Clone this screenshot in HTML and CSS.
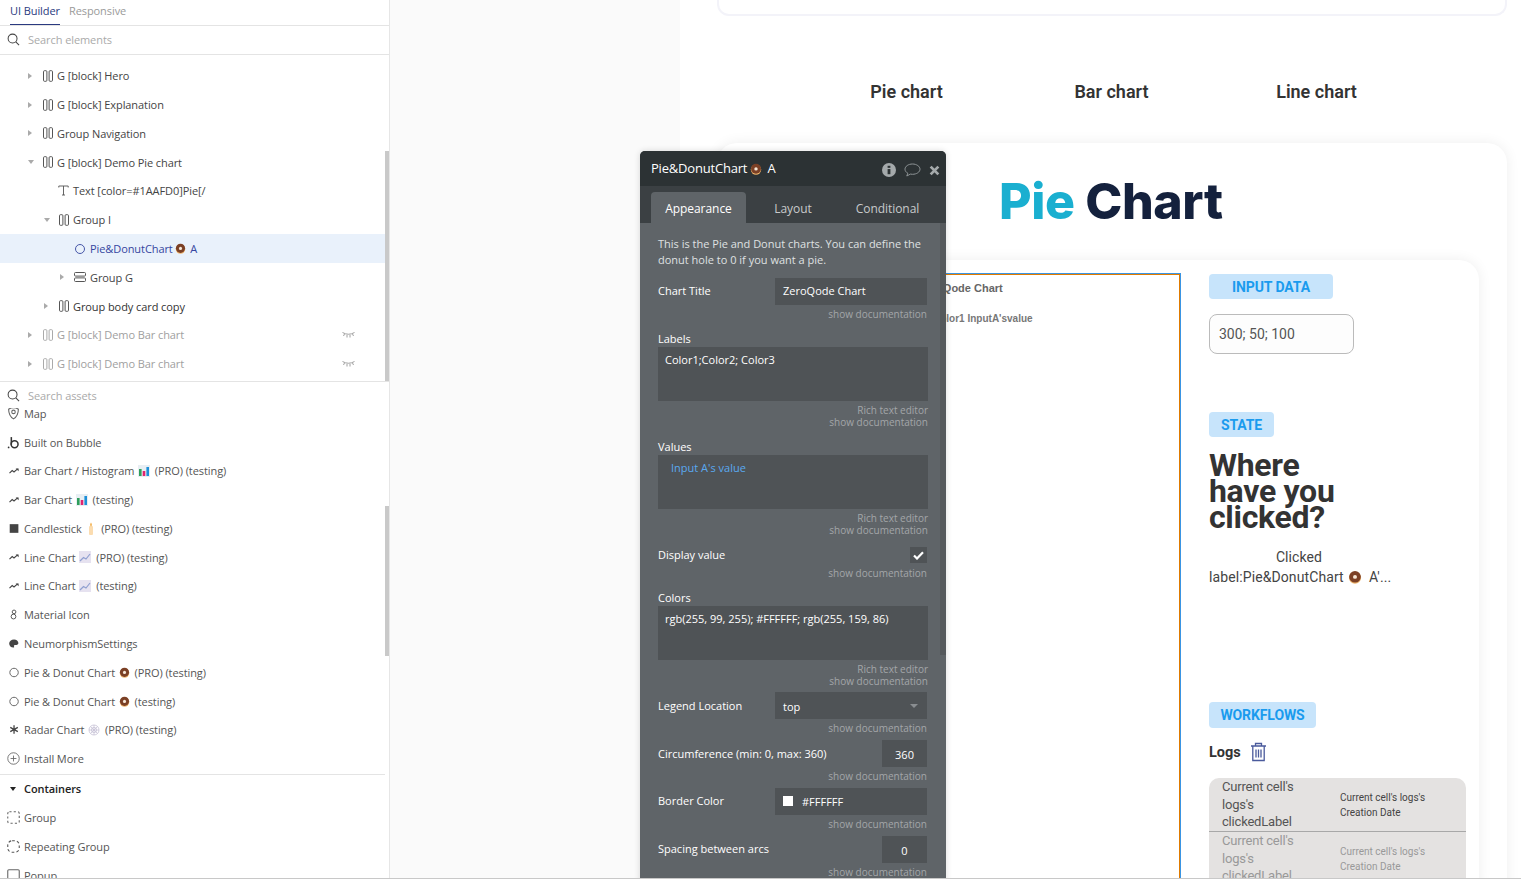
FILE: index.html
```html
<!DOCTYPE html>
<html lang="en">
<head>
    <meta charset="UTF-8">
    <title>UI Builder</title>
    <link rel="stylesheet" href="styles.css">
</head>
<body>

<svg class="icon-defs" width="0" height="0">
    <symbol id="i-cols" viewBox="0 0 10 12"><rect x="0.5" y="0.7" width="3.4" height="10.6" rx="1" fill="none" stroke="currentColor"/><rect x="6.1" y="0.7" width="3.4" height="10.6" rx="1" fill="none" stroke="currentColor"/></symbol>
    <symbol id="i-rows" viewBox="0 0 12 10"><rect x="0.5" y="0.5" width="11" height="3.6" rx="1" fill="none" stroke="currentColor"/><rect x="0.5" y="5.9" width="11" height="3.6" rx="1" fill="none" stroke="currentColor"/></symbol>
    <symbol id="i-search" viewBox="0 0 14 14"><circle cx="6" cy="6" r="4.8" fill="none" stroke="currentColor" stroke-width="1.1"/><path d="M9.5 9.5L13 13" stroke="currentColor" stroke-width="1.1"/></symbol>
    <symbol id="i-trend" viewBox="0 0 10 6"><path d="M0.5 5.2L3.2 2.6L5 4L8.6 0.8" fill="none" stroke="currentColor" stroke-width="1.1"/><path d="M6.6 0.4H9.6V3.2z" fill="currentColor"/></symbol>
    <symbol id="i-closed-eye" viewBox="0 0 13 7"><path d="M0.5 1.5Q6.5 5 12.5 1.5M2.5 3L1.5 5M5 4V6.5M8 4V6.5M10.5 3L11.5 5" fill="none" stroke="currentColor" stroke-width="0.8"/></symbol>
    <symbol id="i-donut" viewBox="0 0 12 12"><circle cx="6" cy="6.6" r="5.2" fill="#f0b46a"/><circle cx="6" cy="5.8" r="5" fill="#7b4026"/><circle cx="6" cy="5.9" r="1.7" fill="#f6e8d8"/></symbol>
    <symbol id="i-bars" viewBox="0 0 12 12"><rect width="12" height="12" fill="#e8eef3"/><rect x="1" y="4" width="2.6" height="7" fill="#2e9e5b"/><rect x="4.7" y="6" width="2.6" height="5" fill="#e0246f"/><rect x="8.4" y="2" width="2.6" height="9" fill="#1d8fd8"/></symbol>
    <symbol id="i-lines" viewBox="0 0 12 12"><rect width="12" height="12" fill="#e6e2f0"/><path d="M1 10L4.5 6.5L7 8L11 3" fill="none" stroke="#8f9fd0" stroke-width="1.2"/></symbol>
    <symbol id="i-candle" viewBox="0 0 8 13"><rect x="2" y="4" width="4" height="9" rx="1" fill="#fbdcb0"/><path d="M4 0.5Q6 3 4 4.6Q2 3 4 0.5" fill="#f4b860"/></symbol>
    <symbol id="i-web" viewBox="0 0 12 12"><g fill="none" stroke="#c6c2d6" stroke-width="0.8"><circle cx="6" cy="6" r="5"/><circle cx="6" cy="6" r="2.6"/><path d="M1 6H11M6 1V11M2.500 2.500L9.500 9.500M9.500 2.500L2.500 9.500"/></g></symbol>
</svg>

<div class="screen">
    <aside class="sidebar">
        <div class="tabs">
            <span class="tab tab-active">UI Builder</span>
            <span class="tab">Responsive</span>
        </div>
        <div class="search-row search-elements">
            <svg class="search-icon"><use href="#i-search"/></svg>
            <span>Search elements</span>
        </div>

        <div class="tree">
            <div class="row lvl-1"><i class="caret"></i><svg class="ico-cols"><use href="#i-cols"/></svg>G [block] Hero</div>
            <div class="row lvl-1"><i class="caret"></i><svg class="ico-cols"><use href="#i-cols"/></svg>G [block] Explanation</div>
            <div class="row lvl-1"><i class="caret"></i><svg class="ico-cols"><use href="#i-cols"/></svg>Group Navigation</div>
            <div class="row lvl-1"><i class="caret caret-open"></i><svg class="ico-cols"><use href="#i-cols"/></svg>G [block] Demo Pie chart</div>
            <div class="row lvl-2"><i class="caret caret-none"></i><svg class="ico-t" viewBox="0 0 11 11"><path d="M0.800 2.500V1H10.200V2.500M5.500 1V10M4 10H7" fill="none" stroke="#555" stroke-width="0.900"/></svg>Text [color=#1AAFD0]Pie[/</div>
            <div class="row lvl-2"><i class="caret caret-open"></i><svg class="ico-cols"><use href="#i-cols"/></svg>Group I</div>
            <div class="row lvl-3 row-selected"><i class="caret caret-none"></i><i class="ico-ring"></i>Pie&amp;DonutChart <svg class="emoji emoji-tree"><use href="#i-donut"/></svg> A</div>
            <div class="row lvl-3"><i class="caret"></i><svg class="ico-rows"><use href="#i-rows"/></svg>Group G</div>
            <div class="row lvl-2 row-dark"><i class="caret"></i><svg class="ico-cols"><use href="#i-cols"/></svg>Group body card copy</div>
            <div class="row lvl-1 row-hidden"><i class="caret"></i><svg class="ico-cols"><use href="#i-cols"/></svg>G [block] Demo Bar chart<svg class="eye"><use href="#i-closed-eye"/></svg></div>
            <div class="row lvl-1 row-hidden"><i class="caret"></i><svg class="ico-cols"><use href="#i-cols"/></svg>G [block] Demo Bar chart<svg class="eye"><use href="#i-closed-eye"/></svg></div>
            <div class="scroll-thumb thumb-tree"></div>
        </div>

        <div class="search-row search-assets">
            <svg class="search-icon"><use href="#i-search"/></svg>
            <span>Search assets</span>
        </div>

        <div class="assets">
            <div class="asset asset-first"><svg class="asset-ico" viewBox="0 0 12 12"><path d="M1.500 2Q6 -0.500 10.500 2Q10.500 8 6 11Q1.500 8 1.500 2z" fill="none" stroke="#666"/><circle cx="6" cy="4.500" r="1.600" fill="none" stroke="#666"/></svg>Map</div>
            <div class="asset"><svg class="asset-ico" viewBox="0 0 12 12"><path d="M4 1V8" stroke="#333" stroke-width="1.400"/><circle cx="7" cy="7.600" r="3.200" fill="none" stroke="#333" stroke-width="1.400"/><circle cx="1.500" cy="10.500" r="0.800" fill="#333"/></svg>Built on Bubble</div>
            <div class="asset"><svg class="asset-ico ico-trend"><use href="#i-trend"/></svg>Bar Chart / Histogram <svg class="emoji"><use href="#i-bars"/></svg> (PRO) (testing)</div>
            <div class="asset"><svg class="asset-ico ico-trend"><use href="#i-trend"/></svg>Bar Chart <svg class="emoji"><use href="#i-bars"/></svg> (testing)</div>
            <div class="asset"><svg class="asset-ico" viewBox="0 0 12 12"><rect x="2.500" y="2" width="8" height="8" fill="#444"/></svg>Candlestick <svg class="emoji emoji-candle"><use href="#i-candle"/></svg> (PRO) (testing)</div>
            <div class="asset"><svg class="asset-ico ico-trend"><use href="#i-trend"/></svg>Line Chart <svg class="emoji"><use href="#i-lines"/></svg> (PRO) (testing)</div>
            <div class="asset"><svg class="asset-ico ico-trend"><use href="#i-trend"/></svg>Line Chart <svg class="emoji"><use href="#i-lines"/></svg> (testing)</div>
            <div class="asset"><svg class="asset-ico" viewBox="0 0 12 12"><circle cx="6.500" cy="3.600" r="1.700" fill="none" stroke="#555" stroke-width="0.900"/><circle cx="6" cy="7.900" r="2.200" fill="none" stroke="#555" stroke-width="0.900"/></svg>Material Icon</div>
            <div class="asset"><svg class="asset-ico" viewBox="0 0 12 12"><path d="M6.500 2.200C3.900 2.200 2 3.900 2 6s1.700 3.800 3.800 3.800c.8 0 1-.6.700-1.100-.4-.7 0-1.400.8-1.400h1.400c1.100 0 1.800-.7 1.800-1.700 0-1.900-1.800-3.400-4-3.400z" fill="#444"/></svg>NeumorphismSettings</div>
            <div class="asset"><svg class="asset-ico" viewBox="0 0 12 12"><circle cx="6.500" cy="6" r="3.900" fill="none" stroke="#666" stroke-width="0.900"/></svg>Pie &amp; Donut Chart <svg class="emoji emoji-donut"><use href="#i-donut"/></svg> (PRO) (testing)</div>
            <div class="asset"><svg class="asset-ico" viewBox="0 0 12 12"><circle cx="6.500" cy="6" r="3.900" fill="none" stroke="#666" stroke-width="0.900"/></svg>Pie &amp; Donut Chart <svg class="emoji emoji-donut"><use href="#i-donut"/></svg> (testing)</div>
            <div class="asset"><svg class="asset-ico" viewBox="0 0 12 12"><path d="M6.500 2V10M3 4L10 8M10 4L3 8" stroke="#444" stroke-width="1.200"/></svg>Radar Chart <svg class="emoji"><use href="#i-web"/></svg> (PRO) (testing)</div>
            <div class="asset"><svg class="asset-ico" viewBox="0 0 12 12"><circle cx="6" cy="6" r="5.300" fill="none" stroke="#666" stroke-width="0.800"/><path d="M6 3.300V8.700M3.300 6H8.700" stroke="#666" stroke-width="0.800"/></svg>Install More</div>
            <div class="assets-head"><i class="caret-dark"></i>Containers</div>
            <div class="asset"><svg class="asset-ico" viewBox="0 0 12 12"><rect x="0.700" y="0.700" width="10.600" height="10.600" rx="1.500" fill="none" stroke="#666" stroke-dasharray="2 2"/></svg>Group</div>
            <div class="asset"><svg class="asset-ico" viewBox="0 0 12 12"><rect x="0.700" y="0.700" width="10.600" height="10.600" rx="4" fill="none" stroke="#555" stroke-dasharray="2.500 2"/></svg>Repeating Group</div>
            <div class="asset"><svg class="asset-ico" viewBox="0 0 12 12"><rect x="0.700" y="0.700" width="10.600" height="10.600" rx="1" fill="none" stroke="#666"/></svg>Popup</div>
            <div class="scroll-thumb thumb-assets"></div>
        </div>
    </aside>

    <main class="canvas">
        <div class="page">
            <div class="top-card"></div>

            <nav class="chart-nav">
                <span>Pie chart</span>
                <span>Bar chart</span>
                <span>Line chart</span>
            </nav>

            <section class="demo">
                <h1 class="demo-title"><span class="accent">Pie</span> Chart</h1>

                <div class="demo-card">
                    <div class="chart-box">
                        <div class="chart-title">ZeroQode Chart</div>
                        <div class="chart-legend">Color1 InputA'svalue</div>
                    </div>

                    <div class="demo-side">
                        <div class="pill pill-input">INPUT DATA</div>
                        <div class="value-input">300; 50; 100</div>

                        <div class="pill pill-state">STATE</div>
                        <h2 class="where">Where<br>have you<br>clicked?</h2>
                        <p class="clicked">
                            <span class="clicked-top">Clicked</span>
                            label:Pie&amp;DonutChart <svg class="emoji emoji-large"><use href="#i-donut"/></svg> A'...
                        </p>

                        <div class="pill pill-flows">WORKFLOWS</div>
                        <div class="logs-head">
                            Logs
                            <svg class="trash" viewBox="0 0 17 20"><path d="M1 4H16M5.500 4V1.500H11.500V4M2.800 4V18.500H14.200V4M6 7.500V15.500M8.500 7.500V15.500M11 7.500V15.500" fill="none" stroke="#4a5a9c" stroke-width="1.300"/></svg>
                        </div>
                        <div class="logs">
                            <div class="log-row">
                                <div class="log-label">Current cell's logs's clickedLabel</div>
                                <div class="log-date">Current cell's logs's Creation Date</div>
                            </div>
                            <div class="log-row log-faded">
                                <div class="log-label">Current cell's logs's clickedLabel</div>
                                <div class="log-date">Current cell's logs's Creation Date</div>
                            </div>
                        </div>
                    </div>
                </div>
            </section>
        </div>

        <div class="editor">
            <div class="editor-head">
                <span class="editor-name">Pie&amp;DonutChart <svg class="emoji emoji-head"><use href="#i-donut"/></svg> A</span>
                <span class="editor-actions">
                    <svg width="14" height="14" viewBox="0 0 15 15"><circle cx="7.500" cy="7.500" r="7.500" fill="#a4a9ab"/><rect x="6" y="6.500" width="3" height="5.500" fill="#2c3234"/><rect x="6" y="3" width="3" height="2.200" fill="#2c3234"/></svg>
                    <svg width="17" height="14" viewBox="0 0 17 14"><path d="M8.500 1C4.400 1 1 3.300 1 6.200c0 1.700 1.100 3.100 2.800 4L2.800 13l3.600-1.900c.7.100 1.400.2 2.100.2 4.100 0 7.500-2.300 7.500-5.100S12.600 1 8.500 1z" fill="none" stroke="#8e9496"/></svg>
                    <svg width="11" height="11" viewBox="0 0 12 12"><path d="M1.800 1.800L10.200 10.200M10.200 1.800L1.800 10.200" stroke="#a4a9ab" stroke-width="3"/></svg>
                </span>
            </div>
            <div class="editor-tabs">
                <span class="editor-tab editor-tab-active">Appearance</span>
                <span class="editor-tab">Layout</span>
                <span class="editor-tab">Conditional</span>
            </div>
            <div class="editor-body">
                <p class="editor-intro">This is the Pie and Donut charts. You can define the donut hole to 0 if you want a pie.</p>

                <div class="field field-first">
                    <div class="field-row"><label>Chart Title</label><div class="input input-wide input-title">ZeroQode Chart</div></div>
                    <div class="doc">show documentation</div>
                </div>

                <div class="field">
                    <label class="block-label">Labels</label>
                    <div class="textarea">Color1;Color2; Color3</div>
                    <div class="doc-rich">Rich text editor</div>
                    <div class="doc doc-tight">show documentation</div>
                </div>

                <div class="field">
                    <label class="block-label">Values</label>
                    <div class="textarea textarea-dynamic">Input A's value</div>
                    <div class="doc-rich">Rich text editor</div>
                    <div class="doc doc-tight">show documentation</div>
                </div>

                <div class="field field-check">
                    <div class="field-row field-row-small">
                        <label>Display value</label>
                        <div class="checkbox"><svg width="11" height="9" viewBox="0 0 11 9"><path d="M1 4.500L4 7.500L10 1.200" fill="none" stroke="#fff" stroke-width="2.200"/></svg></div>
                    </div>
                    <div class="doc doc-check">show documentation</div>
                </div>

                <div class="field">
                    <label class="block-label">Colors</label>
                    <div class="textarea">rgb(255, 99, 255); #FFFFFF; rgb(255, 159, 86)</div>
                    <div class="doc-rich">Rich text editor</div>
                    <div class="doc doc-tight">show documentation</div>
                </div>

                <div class="field field-legend">
                    <div class="field-row"><label class="label-low">Legend Location</label><div class="input input-wide input-select">top<i class="select-caret"></i></div></div>
                    <div class="doc">show documentation</div>
                </div>

                <div class="field field-compact">
                    <div class="field-row"><label class="label-low">Circumference (min: 0, max: 360)</label><div class="input input-num">360</div></div>
                    <div class="doc">show documentation</div>
                </div>

                <div class="field field-compact">
                    <div class="field-row"><label>Border Color</label><div class="input input-wide input-color"><i class="swatch"></i>#FFFFFF</div></div>
                    <div class="doc">show documentation</div>
                </div>

                <div class="field field-compact">
                    <div class="field-row"><label>Spacing between arcs</label><div class="input input-num">0</div></div>
                    <div class="doc">show documentation</div>
                </div>

                <div class="editor-thumb"></div>
            </div>
        </div>
    </main>
</div>

</body>
</html>
```
FILE: styles.css
```css
* {
    margin: 0;
    padding: 0;
    box-sizing: border-box;
}

html, body {
    height: 100%;
    overflow: hidden;
}

body {
    font-family: 'Open Sans', sans-serif;
    font-size: 11px;
    color: #444;
    background-color: #fff;
}

.icon-defs {
    position: absolute;
}

.screen {
    display: flex;
    height: 879px;
    border-bottom: 1px solid #c8c8c8;
    overflow: hidden;
}

/* left panel */
.sidebar {
    width: 390px;
    flex-shrink: 0;
    border-right: 1px solid #e6e6e6;
    display: flex;
    flex-direction: column;
    background-color: #fff;
    letter-spacing: -0.08px;
}

.tabs {
    height: 26px;
    padding-left: 10px;
    display: flex;
    gap: 9px;
    border-bottom: 1px solid #e4e4e4;
    flex-shrink: 0;
}

.tab {
    height: 25px;
    line-height: 22px;
    color: #9a9a9a;
    font-size: 11px;
}

.tab-active {
    color: #2a3a80;
    border-bottom: 1px solid #2a3a80;
}

.search-row {
    height: 29px;
    padding-left: 7px;
    display: flex;
    align-items: center;
    gap: 8px;
    color: #aaa;
    border-bottom: 1px solid #e4e4e4;
    flex-shrink: 0;
}

.search-elements {
    padding-bottom: 1px;
}

.search-icon {
    width: 13px;
    height: 13px;
    color: #444;
}

.tree {
    height: 327px;
    padding-top: 6.4px;
    position: relative;
    flex-shrink: 0;
    border-bottom: 1px solid #e4e4e4;
}

.row {
    height: 28.8px;
    display: flex;
    align-items: center;
    white-space: pre;
    margin-right: 4px;
}

.lvl-1 { padding-left: 28px; }
.lvl-2 { padding-left: 44px; }
.lvl-3 { padding-left: 60px; }

.row-selected {
    background-color: #e9f1fb;
    color: #3646a0;
}

.row-dark {
    color: #333;
}

.row-hidden {
    color: #a0a0a0;
}

.caret {
    width: 0;
    height: 0;
    margin-right: 11px;
    border-left: 4px solid #aaa;
    border-top: 3px solid transparent;
    border-bottom: 3px solid transparent;
}

.caret-open {
    margin-right: 9px;
    border-left: 3px solid transparent;
    border-right: 3px solid transparent;
    border-top: 4px solid #aaa;
    border-bottom: none;
}

.caret-none {
    border-color: transparent;
}

.ico-cols {
    width: 10px;
    height: 12px;
    margin-right: 4px;
    color: #555;
}

.row-hidden .ico-cols {
    color: #aaa;
}

.ico-rows {
    width: 12px;
    height: 10px;
    margin-right: 4px;
    margin-left: -1px;
    color: #555;
}

.ico-t {
    width: 11px;
    height: 11px;
    margin-right: 4px;
    margin-left: -1px;
}

.ico-ring {
    width: 10px;
    height: 10px;
    margin-right: 5px;
    border: 1px solid #4656a8;
    border-radius: 50%;
}

.eye {
    width: 13px;
    height: 7px;
    margin-left: auto;
    margin-right: 30px;
    color: #888;
}

.emoji {
    width: 12px;
    height: 12px;
    margin: 0 2px 0 1px;
    vertical-align: -2px;
    flex-shrink: 0;
}

.emoji-tree {
    width: 11px;
    height: 11px;
    margin: 0 1px 0 0;
}

.emoji-donut {
    width: 11px;
    height: 11px;
}

.emoji-candle {
    width: 8px;
    height: 13px;
    margin: 0 3px;
}

.emoji-head {
    width: 12px;
    height: 12px;
    margin: 0 2px 0 0;
}

.emoji-large {
    width: 14px;
    height: 14px;
    margin: 0 3px 0 1px;
}

.scroll-thumb {
    position: absolute;
    right: 0;
    width: 4px;
    background-color: #c9c9c9;
}

.thumb-tree {
    top: 96px;
    bottom: 0;
}

.assets {
    flex: 1;
    overflow: hidden;
    position: relative;
    margin-top: -1px;
}

.search-assets {
    border-bottom: none;
    height: 27px;
}

.asset {
    height: 28.8px;
    padding-left: 7px;
    display: flex;
    align-items: center;
    white-space: pre;
    color: #555;
}

.asset-first {
    margin-top: -9.2px;
}

.asset-ico {
    width: 13px;
    height: 13px;
    margin-right: 4px;
    flex-shrink: 0;
}

.ico-trend {
    width: 10px;
    height: 6px;
    margin: 0 5px 0 2px;
    color: #444;
}

.assets-head {
    height: 28.8px;
    margin-top: 1.1px;
    margin-right: 4px;
    padding: 0 0 1px 10px;
    display: flex;
    align-items: center;
    gap: 8px;
    border-top: 1px solid #e4e4e4;
    color: #222;
    font-weight: 600;
}

.caret-dark {
    width: 0;
    height: 0;
    border-left: 3px solid transparent;
    border-right: 3px solid transparent;
    border-top: 4px solid #222;
}

.thumb-assets {
    top: 98px;
    height: 150px;
}

/* canvas */
.canvas {
    flex: 1;
    position: relative;
    background-color: #fafafa;
    overflow: hidden;
}

.page {
    margin-left: 290px;
    height: 100%;
    background-color: #fff;
    padding: 0 14px 0 37px;
    color: #333;
    font-family: Roboto, sans-serif;
}

.top-card {
    height: 16px;
    border: 2px solid #f3f3f9;
    border-top: none;
    border-radius: 0 0 12px 12px;
}

.chart-nav {
    margin-top: 65px;
    margin-left: 87px;
    display: flex;
    font-size: 18px;
    font-weight: 600;
    color: #333;
}

.chart-nav span {
    width: 205px;
    text-align: center;
}

.demo {
    margin-top: 41px;
    height: 760px;
    border-radius: 20px 20px 0 0;
    background-color: #fff;
    box-shadow: 0 0 14px rgba(0, 0, 0, 0.07);
}

.demo-title {
    padding-left: 282px;
    height: 117px;
    line-height: 116px;
    font-family: Inter, sans-serif;
    font-size: 50px;
    font-weight: 800;
    letter-spacing: -0.4px;
    color: #14213d;
}

.accent {
    color: #1aafd0;
}

.demo-card {
    width: 734px;
    height: 640px;
    margin-left: 28px;
    padding-top: 13px;
    display: flex;
    background-color: #fff;
    border-radius: 20px;
    box-shadow: 0 0 14px rgba(0, 0, 0, 0.07);
}

.chart-box {
    width: 436px;
    height: 620px;
    border-top: 1px solid #3a95e4;
    border-right: 1px solid #3a95e4;
    box-shadow: inset -1px 1px 0 #e07b00;
    padding-left: 174px;
    font-family: 'Liberation Sans', sans-serif;
    color: #666;
}

.chart-title {
    margin-top: 8px;
    font-size: 11px;
    font-weight: 700;
}

.chart-legend {
    margin-top: 19px;
    margin-left: 14px;
    font-size: 10px;
    font-weight: 700;
    color: #777;
}

.demo-side {
    margin-left: 28px;
    margin-top: 1px;
    flex: 1;
}

.pill {
    height: 25px;
    line-height: 27px;
    border-radius: 4px;
    background-color: #c7e4fb;
    color: #1a9bee;
    font-size: 14px;
    font-weight: 700;
    letter-spacing: -0.1px;
    text-align: center;
}

.pill-input { width: 124px; }
.pill-state { width: 65px; margin-top: 58px; }
.pill-flows { width: 107px; height: 26px; margin-top: 115px; }

.value-input {
    width: 145px;
    height: 40px;
    margin-top: 15px;
    padding-left: 9px;
    line-height: 38px;
    border: 1px solid #bbb;
    border-radius: 8px;
    background-color: #fdfdfd;
    font-size: 14px;
    color: #555;
}

.where {
    margin-top: 15px;
    font-size: 32px;
    line-height: 26px;
    font-weight: 700;
    letter-spacing: -0.3px;
    color: #333;
}

.clicked {
    width: 180px;
    margin-top: 17px;
    font-size: 14px;
    line-height: 20px;
    letter-spacing: 0.1px;
    white-space: nowrap;
    color: #444;
}

.clicked-top {
    display: block;
    text-align: center;
}

.logs-head {
    margin-top: 14px;
    display: flex;
    align-items: center;
    gap: 9px;
    font-size: 14.5px;
    font-weight: 700;
    color: #333;
}

.trash {
    width: 17px;
    height: 20px;
}

.logs {
    width: 257px;
    margin-top: 16px;
    border-radius: 10px 10px 0 0;
    background-color: #e4e2e1;
    overflow: hidden;
}

.log-row {
    height: 54px;
    padding-left: 13px;
    display: flex;
    align-items: center;
    border-bottom: 1px solid #a8a8a8;
}

.log-label {
    width: 118px;
    font-size: 13px;
    letter-spacing: -0.2px;
    line-height: 17.500px;
    padding-right: 30px;
    color: #555;
}

.log-date {
    width: 110px;
    font-size: 10px;
    line-height: 15px;
    color: #444;
}

.log-faded .log-label,
.log-faded .log-date {
    color: #999;
}

/* property editor over the canvas */
.editor {
    position: absolute;
    left: 250px;
    top: 151px;
    width: 306px;
    height: 760px;
    border-radius: 5px 5px 0 0;
    background-color: #5f6468;
    box-shadow: 0 0 6px rgba(0, 0, 0, 0.15);
    overflow: hidden;
    color: #fff;
}

.editor-head {
    height: 35px;
    padding: 0 6px 0 11px;
    display: flex;
    justify-content: space-between;
    align-items: center;
    background-color: #2c3234;
    font-size: 13px;
}

.editor-name {
    letter-spacing: -0.2px;
    margin-top: -2px;
}

.editor-actions {
    display: flex;
    align-items: center;
    gap: 8px;
    margin-top: 3px;
}

.editor-tabs {
    height: 37px;
    padding: 6px 0 0 11px;
    display: flex;
    background-color: #3b4043;
    font-size: 12px;
    letter-spacing: -0.05px;
    color: #c8cacb;
}

.editor-tab {
    width: 95px;
    height: 31px;
    line-height: 34px;
    text-align: center;
    border-radius: 4px 4px 0 0;
}

.editor-tab-active {
    background-color: #5f6468;
    color: #fff;
}

.editor-tab:nth-child(2) { width: 94px; }

.editor-body {
    position: relative;
    padding: 13px 19px 0 18px;
    height: 700px;
}

.editor-intro {
    line-height: 16px;
    color: #dfe1e2;
}

.field {
    margin-top: 14px;
}

.field-first { margin-top: 10px; }
.field-check { margin-top: 11px; }
.field-legend { margin-top: 5px; }
.field-compact { margin-top: 6px; }

.field-row {
    height: 27px;
    display: flex;
    justify-content: space-between;
    align-items: center;
}

.field-row-small {
    height: 16px;
}

label {
    color: #fff;
    line-height: 12px;
    margin-top: -1px;
}

.label-low {
    margin-top: 1px;
}

.block-label {
    display: block;
    height: 14px;
}

.input {
    height: 27px;
    line-height: 27px;
    background-color: #4f5356;
    color: #fff;
}

.input-wide {
    width: 152px;
    padding-left: 8px;
}

.input-title {
    line-height: 25px;
}

.input-num {
    width: 45px;
    line-height: 29px;
    text-align: center;
}

.input-select {
    position: relative;
    line-height: 29px;
}

.select-caret {
    position: absolute;
    right: 9px;
    top: 12px;
    border-left: 4px solid transparent;
    border-right: 4px solid transparent;
    border-top: 4px solid #8a8e91;
}

.input-color {
    display: flex;
    align-items: center;
    gap: 9px;
    padding-bottom: 1px;
}

.swatch {
    width: 10px;
    height: 10px;
    background-color: #fff;
}

.textarea {
    width: 270px;
    height: 54px;
    padding: 5px 7px;
    line-height: 16px;
    background-color: #4f5356;
    color: #fff;
}

.textarea-dynamic {
    padding-left: 13px;
    color: #5aa9f0;
}

.doc, .doc-rich {
    line-height: 12px;
    font-size: 10px;
    color: #a3a6a8;
    text-align: right;
}

.doc {
    margin-top: 3px;
}

.doc-check {
    margin-top: 4px;
}

.doc-rich {
    margin-top: 3px;
    margin-right: -1px;
}

.doc-tight {
    margin-top: 0;
    margin-right: -1px;
}

.checkbox {
    width: 17px;
    height: 16px;
    display: flex;
    align-items: center;
    justify-content: center;
    background-color: #4f5356;
}

.editor-thumb {
    position: absolute;
    right: 0;
    top: 0;
    width: 6px;
    height: 432px;
    background-color: #55595c;
}
```
